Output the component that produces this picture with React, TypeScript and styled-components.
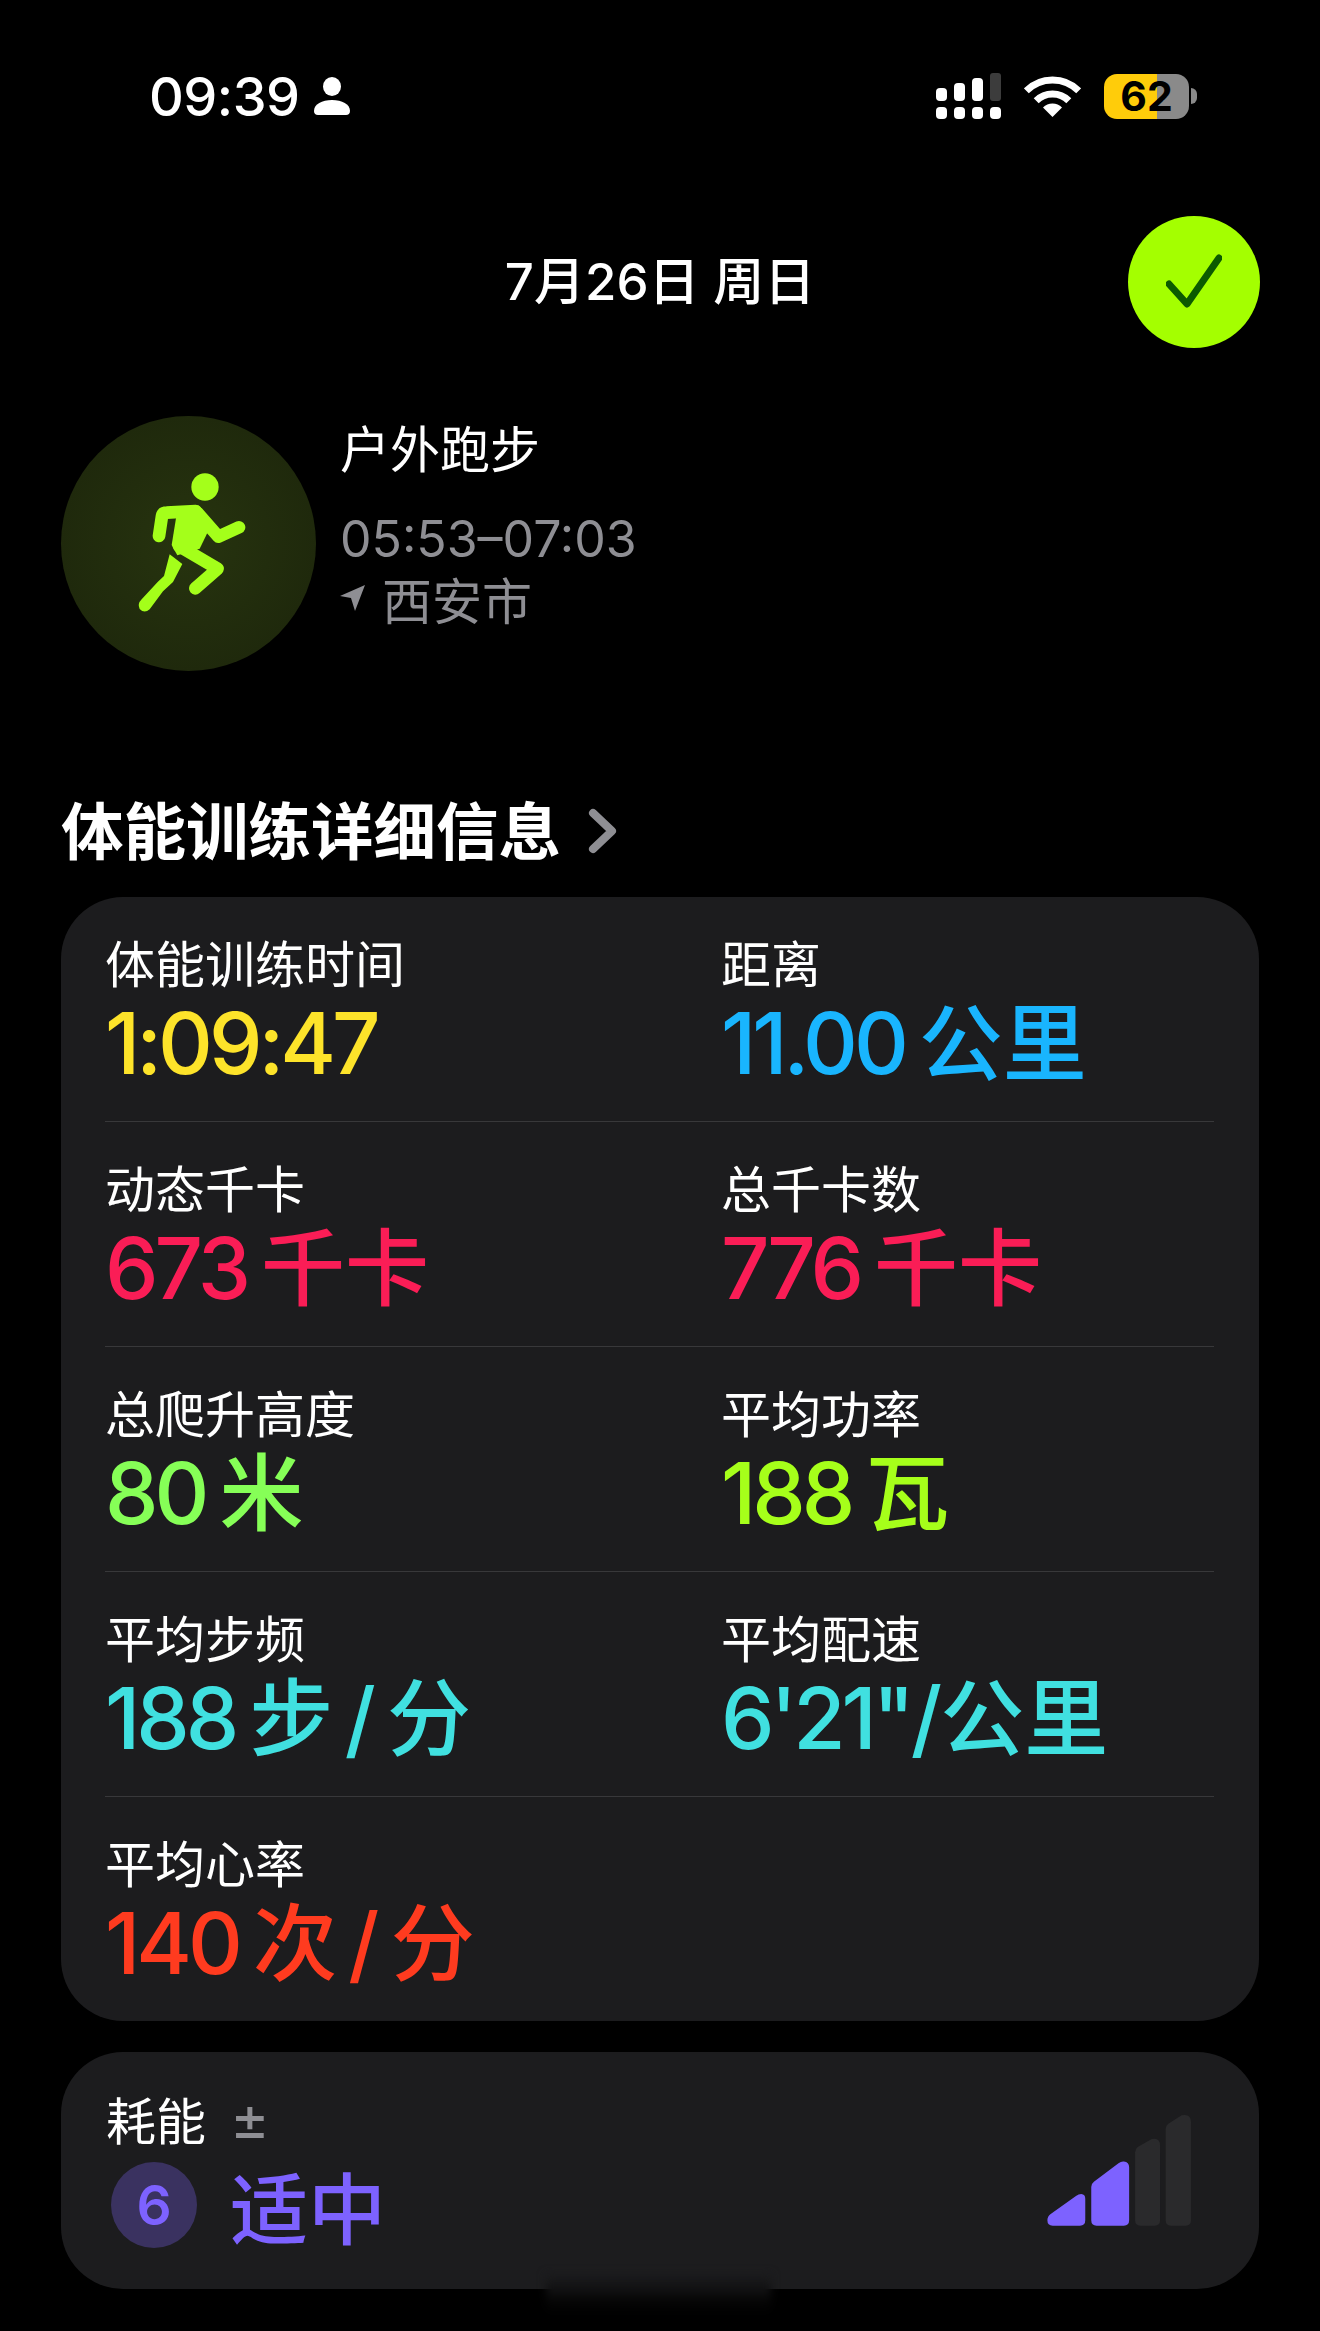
import React from "react";
import styled, { createGlobalStyle } from "styled-components";

const CJK = `"Noto Sans CJK SC", "Noto Sans", sans-serif`;
const NUM = `Inter, "Noto Sans CJK SC", sans-serif`;

const GlobalStyle = createGlobalStyle`
  html, body {
    margin: 0;
    padding: 0;
    background: #000;
  }
`;

const Page = styled.div`
  width: 1320px;
  height: 2331px;
  background: #000;
  color: #fff;
  font-family: ${CJK};
  overflow: hidden;
  box-sizing: border-box;
  padding: 0 61px;
`;

const StatusBar = styled.div`
  display: flex;
  align-items: center;
  height: 46px;
  margin-top: 73px;
  padding: 0 62px 0 88px;
`;

const Clock = styled.span`
  font-family: ${NUM};
  font-size: 54px;
  font-weight: 500;
  letter-spacing: -0.5px;
  line-height: 48px;
  padding-top: 2px;
`;

const StatusRight = styled.div`
  display: flex;
  align-items: center;
  gap: 23px;
  margin-left: auto;
`;

const Battery = styled.div`
  display: flex;
  align-items: center;
  gap: 2px;
`;

const BatteryBody = styled.div`
  width: 85px;
  height: 45px;
  border-radius: 13px;
  background: linear-gradient(90deg, #ffcc0a 62%, #8a8a8a 62%);
  color: #000;
  font-family: ${NUM};
  font-size: 41px;
  font-weight: 700;
  line-height: 45px;
  text-align: center;
`;

const BatteryNub = styled.div`
  width: 6px;
  height: 16px;
  border-radius: 0 8px 8px 0;
  background: #8a8a8a;
`;

const Header = styled.div`
  position: relative;
  display: flex;
  justify-content: center;
  align-items: center;
  height: 132px;
  margin-top: 97px;
`;

const DateTitle = styled.div`
  font-family: ${NUM}, ${CJK};
  font-size: 51px;
  font-weight: 500;
  line-height: 60px;
`;

const DoneButton = styled.div`
  position: absolute;
  right: -1px;
  top: 0;
  width: 132px;
  height: 132px;
  border-radius: 50%;
  background: #a4ff00;
  display: flex;
  align-items: center;
  justify-content: center;
`;

const Workout = styled.div`
  display: flex;
  gap: 24px;
  margin-top: 68px;
`;

const WorkoutBadge = styled.div`
  width: 255px;
  height: 255px;
  border-radius: 50%;
  background: radial-gradient(closest-side, #27340f 0%, #1f290c 100%);
  display: flex;
  align-items: center;
  justify-content: center;
  flex: none;
`;

const WorkoutInfo = styled.div`
  display: flex;
  flex-direction: column;
`;

const WorkoutName = styled.div`
  font-size: 50px;
  line-height: 60px;
`;

const WorkoutTime = styled.div`
  font-family: ${NUM};
  font-size: 50px;
  line-height: 60px;
  color: #8e8e93;
  margin-top: 33px;
`;

const WorkoutPlace = styled.div`
  display: flex;
  align-items: center;
  gap: 17px;
  font-size: 50px;
  line-height: 60px;
  color: #8e8e93;
  margin-top: -1px;
`;

const SectionTitle = styled.div`
  display: flex;
  align-items: center;
  gap: 27px;
  font-size: 62.5px;
  font-weight: 700;
  line-height: 80px;
  margin-top: 117px;
  height: 80px;
`;

const SectionChevron = styled.svg`
  margin-top: 6px;
`;

const Card = styled.div`
  background: #1c1c1e;
  border-radius: 62px;
  padding: 0 45px 0 44px;
  margin-top: 29px;
`;

const MetricRow = styled.div`
  display: grid;
  grid-template-columns: 616px 1fr;
  height: 225px;
  box-sizing: border-box;
  padding-top: 34px;
  border-bottom: 1px solid #38383a;

  &:last-child {
    border-bottom: none;
    height: 224px;
  }
`;

const Label = styled.div`
  font-size: 50px;
  line-height: 60px;
`;

const Value = styled.div<{ $color: string }>`
  color: ${(p) => p.$color};
  font-family: ${NUM};
  font-size: 85px;
  font-weight: 500;
  letter-spacing: -4px;
  line-height: 80px;
  margin-top: 13px;
  white-space: pre;
`;

const Unit = styled.span<{ $tight?: boolean }>`
  font-family: ${NUM};
  font-size: 84px;
  font-weight: 500;
  letter-spacing: 0;
  line-height: 0;
  word-spacing: -11px;
  margin-left: ${(p) => (p.$tight ? 2 : 14)}px;
`;

const EffortCard = styled(Card)`
  position: relative;
  display: flex;
  align-items: center;
  height: 237px;
  box-sizing: border-box;
  margin-top: 31px;
  padding: 0 67px 0 45px;
`;

const EffortInfo = styled.div`
  align-self: flex-start;
  padding-top: 36px;
`;

const EffortLabel = styled.div`
  display: flex;
  align-items: center;
  gap: 24px;
  font-size: 50px;
  line-height: 60px;
`;

const PlusMinus = styled.span`
  font-family: ${NUM};
  font-size: 60px;
  line-height: 60px;
  color: #8e8e93;
`;

const EffortBody = styled.div`
  display: flex;
  align-items: center;
  margin-top: 12px;
`;

const EffortScore = styled.div`
  width: 86px;
  height: 86px;
  margin-left: 5px;
  border-radius: 50%;
  background: #3a3260;
  color: #7d62ff;
  font-family: ${NUM};
  font-size: 55px;
  font-weight: 600;
  display: flex;
  align-items: center;
  justify-content: center;
`;

const EffortText = styled.div`
  color: #7d62ff;
  font-size: 78px;
  font-weight: 500;
  line-height: 90px;
  margin-left: 33px;
`;

const EffortBars = styled.svg`
  margin-left: auto;
`;

// the smeared patch across the bottom edge of the last card
const EdgeSmudge = styled.div`
  position: absolute;
  left: 485px;
  bottom: -25px;
  width: 225px;
  height: 40px;
  background: linear-gradient(#1c1c1e 0%, #111112 40%, #060606 65%, #000 100%);
  filter: blur(4px);
`;

const PersonIcon = () => (
  <svg width="36" height="38" viewBox="0 0 36 38" style={{ marginLeft: 14 }}>
    <ellipse cx="18" cy="9.5" rx="9" ry="9.5" fill="#fff" />
    <path d="M0 34C0 27 8 23 18 23s18 4 18 11c0 2.5-1.5 4-4 4H4c-2.500 0-4-1.500-4-4Z" fill="#fff" />
  </svg>
);

const SignalIcon = () => (
  <svg width="65" height="46" viewBox="0 0 65 46">
    <rect x="0" y="15" width="11" height="13" rx="4" fill="#fff" />
    <rect x="18" y="10" width="11" height="18" rx="4" fill="#fff" />
    <rect x="36" y="5" width="11" height="23" rx="4" fill="#fff" />
    <rect x="54" y="0" width="11" height="28" rx="3" fill="#3c3c3c" />
    <rect x="0" y="34" width="11" height="12" rx="4" fill="#fff" />
    <rect x="18" y="34" width="11" height="12" rx="4" fill="#fff" />
    <rect x="36" y="34" width="11" height="12" rx="4" fill="#fff" />
    <rect x="54" y="34" width="11" height="12" rx="4" fill="#fff" />
  </svg>
);

const WifiIcon = () => (
  <svg width="57" height="41" viewBox="0 0 57 41">
    <path d="M28.500 41 19 31.500A13.500 13.500 0 0 1 38 31.500Z" fill="#fff" />
    <path d="M12.200 24.700a23 23 0 0 1 32.600 0" fill="none" stroke="#fff" strokeWidth="7" />
    <path d="M2.300 14.800a37 37 0 0 1 52.400 0" fill="none" stroke="#fff" strokeWidth="7" />
  </svg>
);

const RunnerIcon = () => (
  <svg width="130" height="160" viewBox="0 0 390 480" style={{ marginLeft: 11, marginTop: -7 }}>
    <circle cx="228" cy="81" r="41" fill="#a4ff1a" />
    <g fill="none" stroke="#a4ff1a" strokeWidth="38" strokeLinecap="round" strokeLinejoin="round">
      <path d="M90 228 99 168Q101 158 113 158L200 153" />
      <path d="M205 158 268 230 330 202" />
      <path d="M150 258 266 326 199 385" />
    </g>
    <path d="M145 150 208 136 244 200 212 266 145 286 128 255Z" fill="#a4ff1a" />
    <path d="M122 283 160 312 132 366 102 394 62 448Q46 462 32 447 24 432 38 418L86 366 105 348Z" fill="#a4ff1a" />
  </svg>
);

const metricRows = [
  [
    { label: "体能训练时间", value: "1:09:47", color: "#fde32a" },
    { label: "距离", value: "11.00", unit: "公里", color: "#19b5fe" },
  ],
  [
    { label: "动态千卡", value: "673", unit: "千卡", color: "#fa1d56" },
    { label: "总千卡数", value: "776", unit: "千卡", color: "#fa1d56" },
  ],
  [
    { label: "总爬升高度", value: "80", unit: "米", color: "#86ff57" },
    { label: "平均功率", value: "188", unit: "瓦", color: "#a6ff1a" },
  ],
  [
    { label: "平均步频", value: "188", unit: "步 / 分", color: "#40e0e0" },
    { label: "平均配速", value: "6'21\"/", unit: "公里", tight: true, color: "#40e0e0" },
  ],
  [{ label: "平均心率", value: "140", unit: "次 / 分", color: "#ff3b1f" }],
];

export default function App() {
  return (
    <Page>
      <GlobalStyle />
      <StatusBar>
        <Clock>09:39</Clock>
        <PersonIcon />
        <StatusRight>
          <SignalIcon />
          <WifiIcon />
          <Battery>
            <BatteryBody>62</BatteryBody>
            <BatteryNub />
          </Battery>
        </StatusRight>
      </StatusBar>

      <Header>
        <DateTitle>7月26日 周日</DateTitle>
        <DoneButton>
          <svg width="56" height="56" viewBox="0 0 56 56" fill="none">
            <path d="M3 30 21 50 53 4" stroke="#0b5a00" strokeWidth="7" strokeLinecap="round" strokeLinejoin="round" />
          </svg>
        </DoneButton>
      </Header>

      <Workout>
        <WorkoutBadge>
          <RunnerIcon />
        </WorkoutBadge>
        <WorkoutInfo>
          <WorkoutName>户外跑步</WorkoutName>
          <WorkoutTime>05:53–07:03</WorkoutTime>
          <WorkoutPlace>
            <svg width="25" height="26" viewBox="0 0 25 26">
              <path d="M25 0 15 26 11 13 0 11Z" fill="#8e8e93" />
            </svg>
            西安市
          </WorkoutPlace>
        </WorkoutInfo>
      </Workout>

      <SectionTitle>
        体能训练详细信息
        <SectionChevron width="30" height="46" viewBox="0 0 30 46" fill="none">
          <path d="M5 5 24 23 5 41" stroke="#8e8e93" strokeWidth="8" strokeLinecap="round" strokeLinejoin="round" />
        </SectionChevron>
      </SectionTitle>

      <Card>
        {metricRows.map((row) => (
          <MetricRow key={row[0].label}>
            {row.map((m) => (
              <div key={m.label}>
                <Label>{m.label}</Label>
                <Value $color={m.color}>
                  {m.value}
                  {m.unit && <Unit $tight={m.tight}>{m.unit}</Unit>}
                </Value>
              </div>
            ))}
          </MetricRow>
        ))}
      </Card>

      <EffortCard>
        <EffortInfo>
          <EffortLabel>
            耗能
            <PlusMinus>±</PlusMinus>
          </EffortLabel>
          <EffortBody>
            <EffortScore>6</EffortScore>
            <EffortText>适中</EffortText>
          </EffortBody>
        </EffortInfo>
        <EffortBars width="147" height="113" viewBox="30 30 440 340">
          <path d="M36 350Q36 338 46 331L122 277Q130 271 138 271 150 272 150 285V350Q150 366 134 366H52Q36 366 36 350Z" fill="#7d62ff" />
          <path d="M168 250Q168 240 176 234L250 178Q258 172 266 173 282 175 282 190V350Q282 366 266 366H184Q168 366 168 350Z" fill="#7d62ff" />
          <path d="M300 145Q300 135 308 129L350 105Q375 100 375 125V350Q375 366 359 366H316Q300 366 300 350Z" fill="#2a2a2c" />
          <path d="M392 75Q392 65 400 59L440 34Q468 28 468 55V350Q468 366 452 366H408Q392 366 392 350Z" fill="#2a2a2c" />
        </EffortBars>
        <EdgeSmudge />
      </EffortCard>
    </Page>
  );
}
